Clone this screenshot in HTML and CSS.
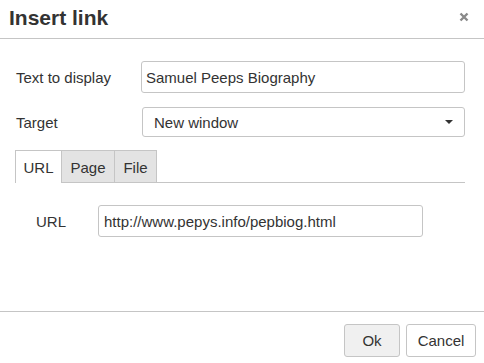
FILE: index.html
```html
<!DOCTYPE html>
<html lang="en">
<head>
    <meta charset="UTF-8">
    <meta name="viewport" content="width=device-width, initial-scale=1.0">
    <title>Insert link</title>
    <link rel="stylesheet" href="styles.css">
</head>

<body>

    <div class="dialog">
        <div class="dialog-head">
            <div class="dialog-title">Insert link</div>
            <svg class="close-icon" width="10" height="10" viewBox="0 0 10 10">
                <path d="M1.5 1.5 L8.5 8.5 M8.5 1.5 L1.5 8.5" stroke="#8a8a8a" stroke-width="2.4" fill="none"/>
            </svg>
        </div>

        <div class="dialog-body">
            <div class="form-row">
                <label class="form-label">Text to display</label>
                <div class="text-box">Samuel Peeps Biography</div>
            </div>
            <div class="form-row row-target">
                <label class="form-label">Target</label>
                <div class="select-box">
                    <span>New window</span>
                    <span class="caret"></span>
                </div>
            </div>

            <div class="tabs">
                <div class="tab active tab-url">URL</div>
                <div class="tab tab-page">Page</div>
                <div class="tab tab-file">File</div>
            </div>

            <div class="tab-panel">
                <label class="form-label url-label">URL</label>
                <div class="text-box url-box">http://www.pepys.info/pepbiog.html</div>
            </div>
        </div>

        <div class="dialog-foot">
            <button class="btn btn-primary">Ok</button>
            <button class="btn btn-cancel">Cancel</button>
        </div>
    </div>

</body>

</html>
```

FILE: styles.css
```css
body {
    margin: 0;
    font-family: "Liberation Sans", Arial, sans-serif;
    font-size: 15px;
    color: #333;
    background: #fff;
}

.dialog {
    width: 484px;
    height: 363px;
    display: flex;
    flex-direction: column;
}

/* header */
.dialog-head {
    height: 38px;
    flex: none;
    border-bottom: 1px solid #c5c5c5;
    display: flex;
    align-items: center;
    justify-content: space-between;
    padding: 0 15px 0 9px;
}

.dialog-title {
    font-size: 21px;
    font-weight: bold;
    color: #333;
    margin-top: -3px;
}

.close-icon {
    margin-top: -4px;
}

/* body */
.dialog-body {
    flex: 1;
    padding: 22px 19px 0 15px;
}

.form-row {
    display: flex;
    align-items: center;
}

.row-target {
    margin-top: 14px;
}

.form-label {
    width: 125px;
    padding-left: 1px;
}

.text-box {
    flex: 1;
    height: 30px;
    border: 1px solid #c5c5c5;
    border-radius: 3px;
    display: flex;
    align-items: center;
    padding-left: 4px;
}

.select-box {
    flex: 1;
    height: 28px;
    border: 1px solid #c5c5c5;
    border-radius: 3px;
    display: flex;
    align-items: center;
    justify-content: space-between;
    padding: 0 11px 0 11px;
    margin-left: 1px;
}

.caret {
    width: 0;
    height: 0;
    border-left: 4px solid transparent;
    border-right: 4px solid transparent;
    border-top: 4px solid #333;
}

/* tabs */
.tabs {
    margin-top: 13px;
    display: flex;
    border-bottom: 1px solid #c5c5c5;
    height: 32px;
}

.tab {
    box-sizing: border-box;
    display: flex;
    align-items: center;
    justify-content: center;
    padding-top: 1px;
    background: #e3e3e3;
    border: 1px solid #c5c5c5;
    border-bottom: none;
    border-left: none;
    color: #333;
}

.tab.active {
    background: #fff;
    border-left: 1px solid #c5c5c5;
    margin-bottom: -1px;
}

.tab-url {
    width: 47px;
}

.tab-page {
    width: 53px;
}

.tab-file {
    width: 42px;
}

.tab-panel {
    display: flex;
    align-items: center;
    margin-top: 22px;
    padding-left: 21px;
}

.url-label {
    width: 62px;
    padding-left: 0;
}

.url-box {
    flex: none;
    width: 318px;
    padding-left: 5px;
}

/* footer */
.dialog-foot {
    height: 39px;
    flex: none;
    border-top: 1px solid #c5c5c5;
    display: flex;
    justify-content: flex-end;
    align-items: flex-start;
    gap: 6px;
    padding: 12px 8px 0 0;
}

.btn {
    font-family: "Liberation Sans", Arial, sans-serif;
    font-size: 15px;
    color: #333;
    height: 33px;
    padding: 0;
    background: #fff;
    border: 1px solid #c5c5c5;
    border-radius: 3px;
}

.btn-primary {
    background: #f0f0f0;
    width: 56px;
}

.btn-cancel {
    width: 70px;
}
```
